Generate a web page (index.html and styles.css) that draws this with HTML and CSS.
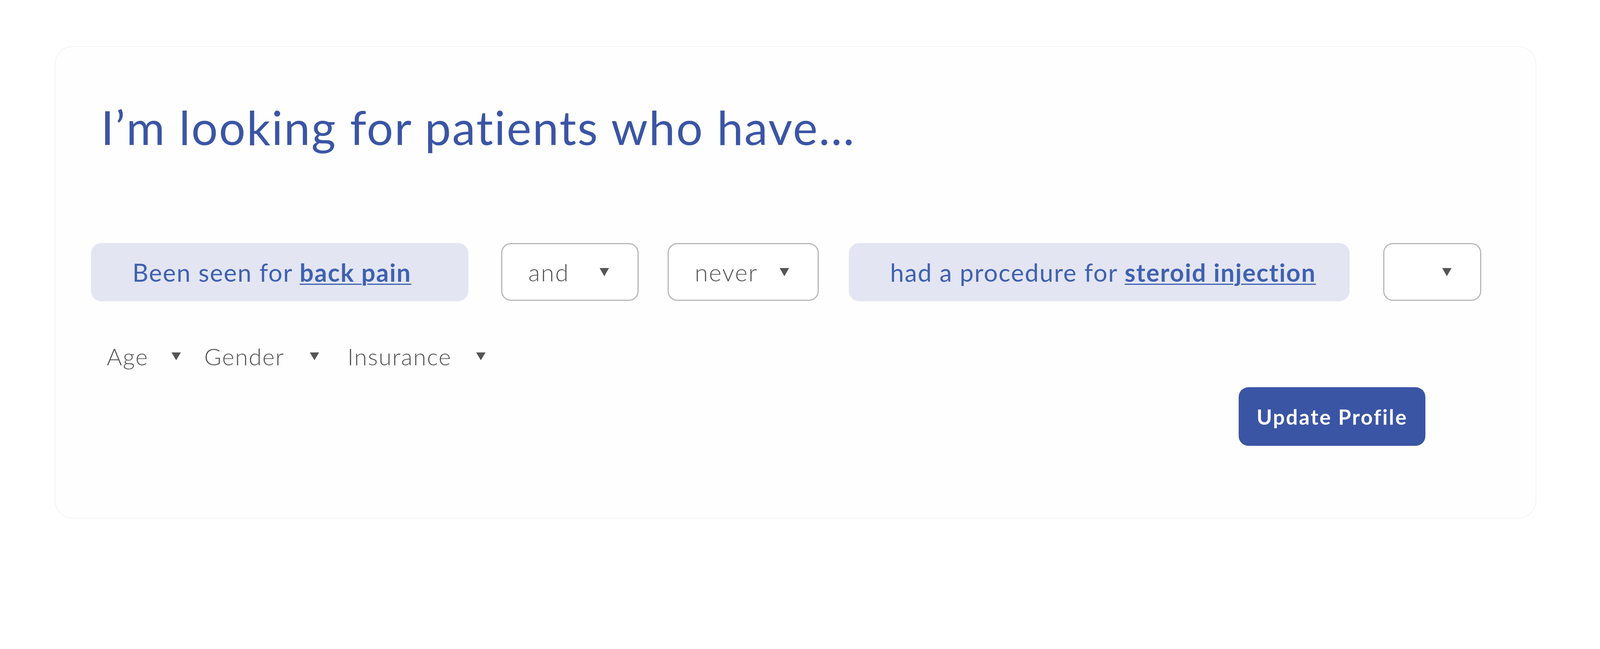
FILE: index.html
```html
<!DOCTYPE html>
<html lang="en">
<head>
<meta charset="utf-8">
<title>Patient search</title>
<link rel="stylesheet" href="styles.css">
</head>
<body>
<div class="card">
  <h1 class="title">I’m looking for patients who have...</h1>
  <div class="criteria">
    <div class="pill pill-seen">Been seen for <a class="term">back pain</a></div>
    <div class="select select-and"><span class="select-label">and</span><span class="caret"></span></div>
    <div class="select select-never"><span class="select-label">never</span><span class="caret"></span></div>
    <div class="pill pill-proc">had a procedure for <a class="term">steroid injection</a></div>
    <div class="select select-empty"><span class="select-label"></span><span class="caret"></span></div>
  </div>
  <div class="filters">
    <div class="filter f-age"><span>Age</span><span class="caret"></span></div>
    <div class="filter f-gender"><span>Gender</span><span class="caret"></span></div>
    <div class="filter f-ins"><span>Insurance</span><span class="caret"></span></div>
  </div>
  <div class="actions">
    <button class="btn">Update Profile</button>
  </div>
</div>
</body>
</html>
```
FILE: styles.css
```css
/* One design unit = one pixel of the 4924px-wide design; scales with the viewport. */
:root {
  --u: calc(100vw / 4924);
}

html, body {
  margin: 0;
  padding: 0;
  background: #ffffff;
  overflow: hidden;
}

body {
  font-family: "Lato", "Open Sans", sans-serif;
  padding-top: calc(142 * var(--u));
}

.card {
  box-sizing: border-box;
  width: calc(4560 * var(--u));
  margin-left: calc(168 * var(--u));
  border: calc(3 * var(--u)) solid #f2f3f5;
  border-radius: calc(56 * var(--u));
  background: #fefefe;
  padding: calc(178 * var(--u)) calc(110 * var(--u)) calc(222 * var(--u)) calc(110 * var(--u));
}

.title {
  margin: 0;
  padding-left: calc(30 * var(--u));
  font-size: calc(144 * var(--u));
  line-height: calc(138 * var(--u));
  font-weight: 400;
  color: #3b55a5;
  letter-spacing: calc(3.6 * var(--u));
}

.criteria {
  display: flex;
  align-items: center;
  margin-top: calc(287 * var(--u));
}

.pill {
  box-sizing: border-box;
  height: calc(179 * var(--u));
  display: flex;
  align-items: center;
  padding-left: calc(127 * var(--u));
  background: #e3e5f2;
  border-radius: calc(32 * var(--u));
  color: #3f61b0;
  font-size: calc(76 * var(--u));
  font-weight: 400;
  letter-spacing: calc(2.5 * var(--u));
  white-space: pre;
}

.pill-seen { width: calc(1161 * var(--u)); }
.pill-proc { width: calc(1541 * var(--u)); margin-left: calc(93 * var(--u)); }

.term {
  font-weight: 700;
  text-decoration: underline;
  text-decoration-thickness: calc(4 * var(--u));
  text-underline-offset: calc(6 * var(--u));
  color: #3f61b0;
}

.select {
  box-sizing: border-box;
  height: calc(178 * var(--u));
  display: flex;
  align-items: center;
  justify-content: space-between;
  padding: 0 calc(88 * var(--u)) 0 calc(80 * var(--u));
  border: calc(4 * var(--u)) solid #b8b8b8;
  border-radius: calc(30 * var(--u));
  background: #ffffff;
  color: #555555;
  font-size: calc(74 * var(--u));
  font-weight: 300;
  letter-spacing: calc(3 * var(--u));
}

.select-and { width: calc(423 * var(--u)); margin-left: calc(101 * var(--u)); }
.select-never { width: calc(465 * var(--u)); margin-left: calc(89 * var(--u)); }
.select-empty { width: calc(301 * var(--u)); margin-left: calc(104 * var(--u)); }

.caret {
  width: 0;
  height: 0;
  border-left: calc(15 * var(--u)) solid transparent;
  border-right: calc(15 * var(--u)) solid transparent;
  border-top: calc(26 * var(--u)) solid #555555;
}

.filters {
  display: flex;
  align-items: center;
  margin-top: calc(120 * var(--u));
  margin-left: calc(48 * var(--u));
  height: calc(100 * var(--u));
  color: #555555;
  font-size: calc(72 * var(--u));
  font-weight: 300;
  letter-spacing: calc(2.5 * var(--u));
}

.filter {
  display: flex;
  align-items: center;
  justify-content: space-between;
}

.filter .caret {
  border-top-width: calc(25 * var(--u));
}

.f-age { width: calc(228 * var(--u)); }
.f-gender { width: calc(354 * var(--u)); margin-left: calc(72 * var(--u)); }
.f-ins { width: calc(425 * var(--u)); margin-left: calc(87 * var(--u)); }

.actions {
  display: flex;
  justify-content: flex-end;
  margin-top: calc(45 * var(--u));
  padding-right: calc(229 * var(--u));
}

.btn {
  box-sizing: border-box;
  width: calc(574 * var(--u));
  height: calc(180 * var(--u));
  border: none;
  border-radius: calc(30 * var(--u));
  background: #3b55a5;
  color: #ffffff;
  font-family: "Lato", "Open Sans", sans-serif;
  font-size: calc(64 * var(--u));
  font-weight: 700;
  letter-spacing: calc(3.8 * var(--u));
  padding: 0;
}
```
